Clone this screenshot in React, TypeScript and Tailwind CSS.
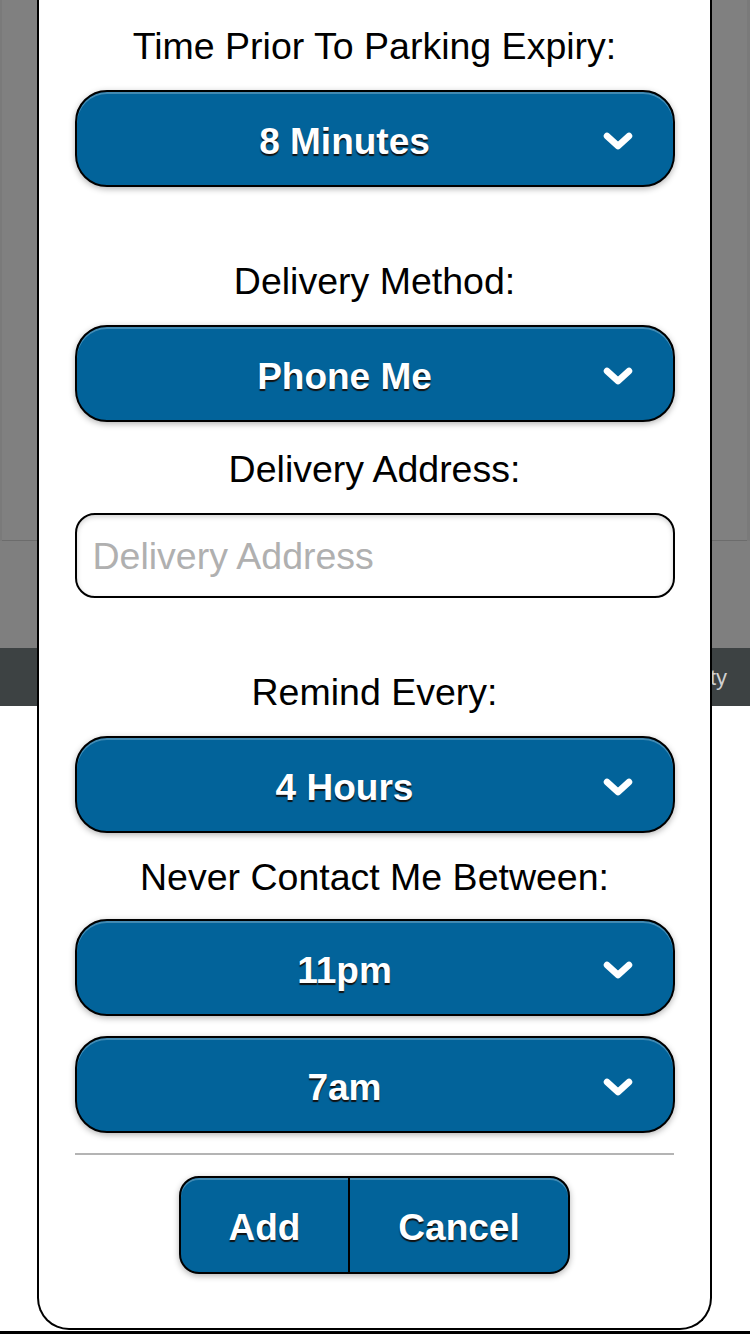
import type { ReactNode } from 'react';

const font = { fontFamily: '"Liberation Sans", Arial, Helvetica, sans-serif' };

function Label({ children, className = '' }: { children: ReactNode; className?: string }) {
  return <div className={`text-center text-[37.5px] leading-[44px] text-black ${className}`}>{children}</div>;
}

function Chevron() {
  return (
    <svg width="30" height="20" viewBox="0 0 30 20" className="absolute right-[40px] top-1/2 mt-[3px] -translate-y-1/2">
      <polyline points="4,4 15,14 26,4" fill="none" stroke="white" strokeWidth="6.5" strokeLinecap="round" strokeLinejoin="round" />
    </svg>
  );
}

function SelectBox({ value, className = '' }: { value: string; className?: string }) {
  return (
    <div
      className={`relative mx-auto flex h-[97px] w-[600px] items-center justify-center rounded-[32px] border-2 border-black bg-[#02639a] pr-[60px] pt-[6px] text-[37px] font-bold text-white shadow-[inset_0_2px_0_rgba(255,255,255,0.25),0_2px_6px_rgba(0,0,0,0.3)] [text-shadow:0_2px_1px_#111] ${className}`}
    >
      {value}
      <Chevron />
    </div>
  );
}

export default function App() {
  return (
    <div style={font} className="relative h-[1334px] w-[750px] overflow-hidden bg-white">
      {/* page behind the popup */}
      <div className="flex h-[541px] w-full bg-[#7a7a7a] pl-[2px] pr-[3px]">
        <div className="h-full w-full border-b border-[#6c6c6c] bg-[#808080]" />
      </div>
      <div className="h-[107px] w-full bg-[#7f7f7f]" />
      <div className="flex h-[58px] w-full items-center justify-end bg-[#3d4243] pr-[23px] text-[22px] text-[#d0d0d0]">
        Privacy &amp; Security
      </div>
      <div className="absolute bottom-0 left-0 h-[3px] w-full bg-black" />

      {/* popup */}
      <div className="absolute left-[37px] top-0 h-[1330px] w-[675px] rounded-b-[32px] border-2 border-t-0 border-black bg-white pt-[24px]">
        <Label>Time Prior To Parking Expiry:</Label>
        <SelectBox value="8 Minutes" className="mt-[22px]" />

        <Label className="mt-[72px]">Delivery Method:</Label>
        <SelectBox value="Phone Me" className="mt-[22px]" />

        <Label className="mt-[25px]">Delivery Address:</Label>
        <div className="mx-auto mt-[22px] flex h-[85px] w-[600px] items-center rounded-[20px] border-2 border-black bg-white pl-[16px] pt-[2px] text-[37.5px] text-[#b0b0b0] shadow-[inset_0_2px_5px_rgba(0,0,0,0.18)]">
          Delivery Address
        </div>

        <Label className="mt-[72px]">Remind Every:</Label>
        <SelectBox value="4 Hours" className="mt-[22px]" />

        <Label className="mt-[22px]">Never Contact Me Between:</Label>
        <SelectBox value="11pm" className="mt-[20px]" />
        <SelectBox value="7am" className="mt-[20px]" />

        <div className="mx-auto mt-[20px] h-[2px] w-[599px] bg-[#b4b4b4]" />

        <div className="mx-auto mt-[21px] flex h-[98px] w-[391px] overflow-hidden rounded-[20px] border-2 border-black bg-[#02639a] pt-[6px] text-[37px] font-bold text-white shadow-[inset_0_2px_0_rgba(255,255,255,0.25),0_2px_6px_rgba(0,0,0,0.3)] [text-shadow:0_2px_1px_#111]">
          <div className="-mt-[6px] flex w-[169px] items-center justify-center border-r-2 border-black pt-[6px]">Add</div>
          <div className="flex flex-1 items-center justify-center">Cancel</div>
        </div>
      </div>
    </div>
  );
}
